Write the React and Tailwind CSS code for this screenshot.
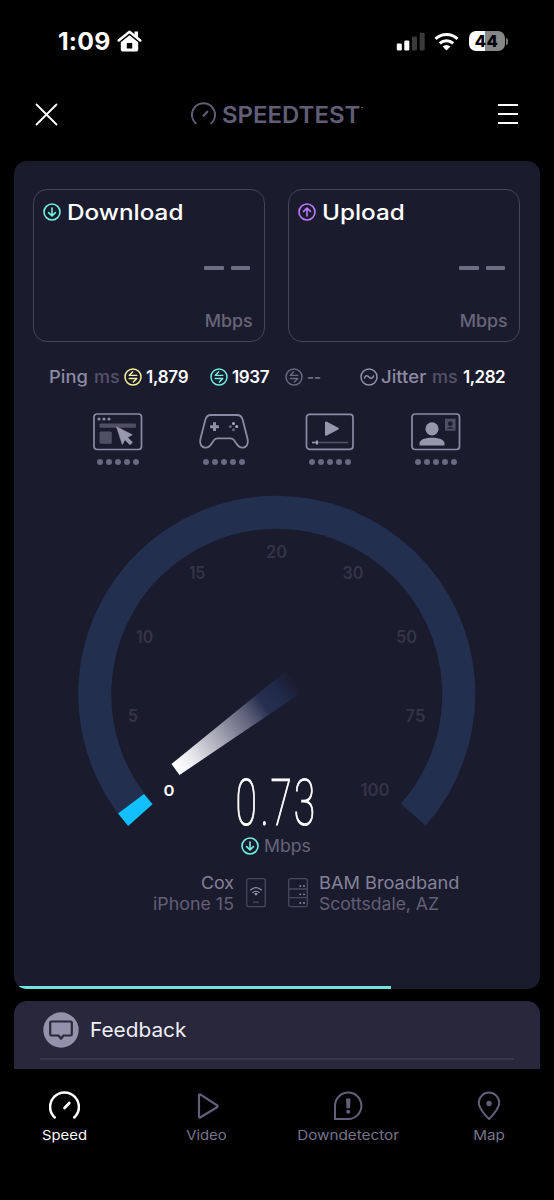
const DownArrow = ({ up = false, color, size = 18 }) => (
  <svg width={size} height={size} viewBox="0 0 18 18" fill="none" stroke={color} strokeWidth="1.6" strokeLinecap="round" strokeLinejoin="round" className="shrink-0">
    <circle cx="9" cy="9" r="8" />
    {up ? <path d="M9 12.900V5.400M5.600 8.400 9 5.200l3.400 3.200" /> : <path d="M9 5.100v7.500M5.600 9.600 9 12.800l3.400-3.200" />}
  </svg>
);

const PingIcon = ({ color }) => (
  <svg width="18" height="18" viewBox="0 0 18 18" fill="none" stroke={color} strokeWidth="1.5" strokeLinecap="round" strokeLinejoin="round" className="shrink-0">
    <circle cx="9" cy="9" r="8" />
    <path d="M8.700 3.800 5.200 7.400h7.600M5.200 10.500h7.600l-3.500 3.600" strokeWidth="1.4" />
  </svg>
);

const Speedo = ({ className, size, stroke = 2 }) => (
  <svg width={size} height={size} viewBox="0 0 28 28" fill="none" stroke="currentColor" strokeWidth={stroke} strokeLinecap="round" className={className}>
    <path d="M5.200 23.900a13 13 0 1 1 17.600 0" />
    <path d="m14 15.300 4.300-4.400" strokeWidth={stroke + 0.2} />
  </svg>
);

const ResultCard = ({ title, up, color }) => (
  <div className="flex h-[153px] w-[232px] flex-col rounded-[14px] border-[1.5px] border-[#464459] pl-[9px] pr-[11px]">
    <div className="mt-[9px] flex h-[26px] items-center gap-[6px]">
      <DownArrow up={up} color={color} />
      <span className="origin-left scale-x-[1.13] pt-px text-[21.5px] font-[550] leading-none text-white">{title}</span>
    </div>
    <div className="mr-[3px] mt-[41px] flex justify-end gap-[7px]">
      <span className="h-1 w-[19.5px] rounded-[1px] bg-[#6f6d83]" />
      <span className="h-1 w-[19.5px] rounded-[1px] bg-[#6f6d83]" />
    </div>
    <div className="mt-[39px] flex h-6 items-center justify-end text-[17px] font-medium leading-none text-[#686679]">
      <span className="origin-right scale-x-[1.05]">Mbps</span>
    </div>
  </div>
);

const Dots = () => (
  <div className="flex gap-[2.5px]">
    {[0, 1, 2, 3, 4].map((i) => (
      <span key={i} className="size-[6.5px] rounded-full bg-[#6b697f]" />
    ))}
  </div>
);

const WebIcon = () => (
  <svg width="50" height="38" viewBox="0 0 50 38" fill="none">
    <rect x="1" y="1" width="47.5" height="35.5" rx="3" stroke="#8d8ba3" strokeWidth="1.7" />
    <g fill="#8d8ba3"><circle cx="6" cy="6" r="1.6" /><circle cx="11" cy="6" r="1.6" /><circle cx="16" cy="6" r="1.6" /></g>
    <rect x="6.5" y="10.5" width="36.5" height="4.2" rx="1" fill="#514f64" />
    <rect x="6.5" y="18.5" width="12.3" height="12.3" rx="1.5" fill="#514f64" />
    <path d="m23.500 13.700 15.800 8.100-4.700 2.600 4.900 4.900-2.600 2.500-4.900-5-2.700 4.800Z" fill="#9997ae" stroke="#9997ae" strokeWidth=".6" strokeLinejoin="round" />
  </svg>
);

const GameIcon = () => (
  <svg width="52" height="38" viewBox="0 0 52 38" fill="none">
    <path d="M13 2h26c3.2 0 4.8 1.6 5.6 4.600l5 19.400c1.200 4.800-1 8.200-4.600 8.600-3.200.3-4.800-1.100-6.700-4.100l-1.700-2.600c-1.200-2-2-2.600-4-2.600H19.400c-2 0-2.800.6-4 2.600l-1.700 2.600c-1.900 3-3.500 4.400-6.700 4.100-3.600-.4-5.800-3.800-4.600-8.600l5-19.400C8.200 3.600 9.800 2 13 2Z" stroke="#8d8ba3" strokeWidth="1.8" />
    <path d="M16.500 9.300v8.800M12.100 13.700h8.800" stroke="#9290a7" strokeWidth="3" />
    <circle cx="35.500" cy="10.400" r="1.500" fill="#aaa8bd" /><circle cx="38.700" cy="13.600" r="1.500" fill="#aaa8bd" />
    <circle cx="32.300" cy="13.600" r="1.500" fill="#656379" /><circle cx="35.500" cy="16.800" r="1.500" fill="#656379" />
  </svg>
);

const PlayerIcon = () => (
  <svg width="50" height="38" viewBox="0 0 50 38" fill="none">
    <rect x="1.500" y="1.300" width="46.500" height="35" rx="3" stroke="#8d8ba3" strokeWidth="1.700" />
    <path d="M21 9.500v12.300l11.800-6.200Z" fill="#9896ad" stroke="#9896ad" strokeWidth="2" strokeLinejoin="round" />
    <path d="M7 29.500h36" stroke="#55536a" strokeWidth="1.600" /><path d="M7 29.500h5" stroke="#8d8ba3" strokeWidth="1.600" /><path d="M12 27.500v4" stroke="#a8a6ba" strokeWidth="1.800" />
  </svg>
);

const CallIcon = () => (
  <svg width="50" height="38" viewBox="0 0 50 38" fill="none">
    <rect x="1" y="1" width="47.500" height="35.500" rx="3" stroke="#8d8ba3" strokeWidth="1.700" />
    <circle cx="21" cy="15.800" r="6.600" fill="#9896ad" />
    <path d="M8.500 32.500v-2c0-3.500 4.300-5.800 12.500-5.800s12.500 2.300 12.500 5.800v2Z" fill="#9896ad" />
    <rect x="34" y="5.700" width="10.500" height="12" fill="#514f64" />
    <circle cx="39.300" cy="10.700" r="2.400" fill="#1e1d30" /><path d="M36 15.800c0-2 6.600-2 6.600 0Z" fill="#1e1d30" />
  </svg>
);

const labels = [
  ["0", 169, 796, 11], ["5", 133, 722, 10], ["10", 144.500, 643, 17], ["15", 197, 579, 16], ["20", 276.500, 557.500, 21],
  ["30", 353, 579, 21], ["50", 406.500, 643, 21], ["75", 415.500, 722, 20], ["100", 375, 796, 29],
];

const Gauge = () => (
  <svg width="526" height="345" viewBox="14 488 526 345" className="block overflow-visible">
    <defs>
      <linearGradient id="needle" gradientUnits="userSpaceOnUse" x1="176" y1="769" x2="295" y2="682">
        <stop offset="0" stopColor="#fff" />
        <stop offset=".12" stopColor="#ececf0" />
        <stop offset=".4" stopColor="#9b9bac" />
        <stop offset=".6" stopColor="#5e6079" />
        <stop offset=".74" stopColor="#252f50" />
        <stop offset=".86" stopColor="#202b4b" />
        <stop offset="1" stopColor="#1b1b2e" />
      </linearGradient>
    </defs>
    <path d="M140.200 814.600A182 182 0 1 1 413.300 814.600" fill="none" stroke="#222f4f" strokeWidth="33" />
    <path d="M118 813.500 144 794l8.500 10.200L128.200 826Z" fill="#12bfff" />
    <path d="M171.500 764 286 671l17 20.500L179.500 775Z" fill="url(#needle)" />
    <g fontFamily="Inter" fontSize="17" fontWeight="600" textAnchor="middle">
      {labels.map(([t, x, y, w], i) => (
        <text key={t} x={x} y={y} textLength={w} lengthAdjust="spacingAndGlyphs" fill={i ? "#353447" : "#fff"} fontSize={i ? 17 : 15}>{t}</text>
      ))}
    </g>
    <text transform="scale(.6 1)" x="392.500 434 451 489.500" y="825.500" fontFamily="Roboto" fontWeight="100" fontSize="65" fill="#fff" stroke="#fff" strokeWidth="1.1">0.73</text>
  </svg>
);

const Tab = ({ label, active, children, stretch }) => (
  <div className={active ? "flex flex-1 flex-col items-center text-white" : "flex flex-1 flex-col items-center text-[#625f7a]"}>
    <div className="mt-[21px] flex h-8 items-center justify-center">{children}</div>
    <span className={(active ? "text-white " : "text-[#777588] ") + "mt-[4px] text-[13.5px] leading-[18px] " + stretch}>{label}</span>
  </div>
);

export default function App() {
  return (
    <div className="flex h-[1200px] w-[554px] flex-col overflow-hidden bg-black font-['Inter',sans-serif] text-white">
      <div className="flex h-[82px] shrink-0 items-center justify-between pl-[58px] pr-[46px]">
        <div className="flex items-center gap-[6px]">
          <span className="w-[53px] origin-left scale-x-[1.03] pt-px text-[24px] font-bold leading-none tracking-[0.2px]">1:09</span>
          <svg width="25" height="22" viewBox="0 0 25 22" fill="none">
            <path d="M1.700 10.500 12.500 1.800l10.800 8.700" stroke="#fff" strokeWidth="2.500" strokeLinecap="round" strokeLinejoin="round" />
            <path d="M17.500 1.500h3.500V8l-3.500-2.500Z" fill="#fff" />
            <path fillRule="evenodd" d="m12.500 5.300 8.700 7v7c0 1.500-.8 2.300-2.200 2.300H6c-1.400 0-2.200-.8-2.200-2.300v-7ZM9.800 13v5.500h5.400V13Z" fill="#fff" />
          </svg>
        </div>
        <div className="flex items-center">
          <svg width="29" height="19" viewBox="0 0 29 19">
            <rect x=".8" y="11.500" width="5" height="7" rx="1.300" fill="#fff" /><rect x="8.300" y="8.500" width="5" height="10" rx="1.300" fill="#fff" />
            <rect x="16" y="4.500" width="5" height="14" rx="1.300" fill="#3a3a3a" /><rect x="23.700" y=".8" width="5" height="17.700" rx="1.300" fill="#3a3a3a" />
          </svg>
          <svg width="25" height="19" viewBox="0 0 25 19" fill="none" stroke="#fff" strokeWidth="3" className="ml-[9px]">
            <path d="M1.500 6.900a15.800 15.800 0 0 1 22 0" /><path d="M5.800 11.400a9.800 9.800 0 0 1 13.400 0" />
            <path d="m12.500 18.500-3.900-3.900a5.300 5.300 0 0 1 7.800 0Z" fill="#fff" stroke="none" />
          </svg>
          <div className="ml-[10px] flex h-5 w-9 items-center justify-center rounded-[7px] bg-[linear-gradient(90deg,#fff_44%,#878787_44%)] text-[16.500px] font-extrabold leading-none tracking-[0.3px] text-black">44</div>
          <span className="ml-[1.500px] h-[7px] w-[2px] rounded-r-full bg-[#777]" />
        </div>
      </div>

      <div className="flex h-16 shrink-0 items-center justify-between pl-[35px] pr-[36px]">
        <svg width="23" height="23" viewBox="0 0 23 23" stroke="#fff" strokeWidth="1.800" strokeLinecap="round"><path d="m1.500 1.500 20 20m0-20-20 20" /></svg>
        <div className="mr-[2px] flex items-center text-[#605e76]">
          <Speedo size={25} stroke={2.200} className="shrink-0" />
          <div className="ml-[6px] flex w-[138px] pt-[2px]">
            <span className="origin-left scale-x-[1.065] text-[22.500px] font-semibold leading-none">SPEEDTEST</span>
          </div>
          <span className="mb-[13px] ml-px h-[1.500px] w-[1.500px] bg-[#4b495d]" />
        </div>
        <div className="flex w-5 flex-col gap-[7px]">
          <span className="h-[2px] bg-white" /><span className="h-[2px] bg-white" /><span className="h-[2px] bg-white" />
        </div>
      </div>

      <main className="mx-[14px] mt-[15px] flex h-[828px] shrink-0 flex-col overflow-hidden rounded-[13px] bg-[#1b1b2e]">
        <div className="mt-7 flex gap-[23px] pl-[19px]">
          <ResultCard title="Download" color="#70f1df" />
          <ResultCard title="Upload" color="#bc79fa" up />
        </div>

        <div className="flex h-[70px] shrink-0 items-center whitespace-nowrap pl-[35px] text-[17px] font-semibold leading-none">
          <span className="w-[45px] origin-left scale-x-[1.08] font-medium text-[#8d8ba3]">Ping</span>
          <span className="w-[30px] origin-left scale-x-[1.06] font-medium text-[#55536a]">ms</span>
          <PingIcon color="#faf29a" />
          <span className="ml-1 w-[64px] tracking-[-0.250px]">1,879</span>
          <PingIcon color="#70f1df" />
          <span className="ml-1 w-[53px] tracking-[-0.400px]">1937</span>
          <PingIcon color="#6b697f" />
          <span className="ml-1 w-[53px] origin-left scale-x-[0.9] text-[#6b697f]">--</span>
          <svg width="18" height="18" viewBox="0 0 18 18" fill="none" stroke="#9290a7" strokeWidth="1.500" strokeLinecap="round" className="shrink-0">
            <circle cx="9" cy="9" r="8" /><path d="M4.500 10c1-3 3-2.700 4.500-1s3.500 2 4.500-1" />
          </svg>
          <span className="ml-[3px] w-[51px] origin-left scale-x-[1.09] font-medium text-[#8d8ba3]">Jitter</span>
          <span className="w-[31px] origin-left scale-x-[1.06] font-medium text-[#55536a]">ms</span>
          <span className="tracking-[-0.500px]">1,282</span>
        </div>

        <div className="ml-[51px] grid w-[424px] shrink-0 grid-cols-4">
          {[WebIcon, GameIcon, PlayerIcon, CallIcon].map((Icon, i) => (
            <div key={i} className="mt-px flex flex-col items-center gap-[7.5px]"><Icon /><Dots /></div>
          ))}
        </div>

        <div className="mt-[23px] shrink-0"><Gauge /></div>
        <div className="flex h-[26px] shrink-0 items-center justify-center gap-[5px] pr-[3px]">
          <DownArrow color="#70f1df" />
          <span className="w-[46px] origin-left scale-x-[1.04] text-[17px] leading-none text-[#686679]">Mbps</span>
        </div>

        <div className="mt-[13px] flex h-[42px] shrink-0 items-center text-[17px] leading-[21px]">
          <div className="w-[220px] origin-right scale-x-[1.05] pt-px text-right text-[#858399]"><div>Cox</div><div className="text-[#626075]">iPhone 15</div></div>
          <svg width="20" height="30" viewBox="0 0 20 30" fill="none" className="ml-[12px]">
            <rect x=".7" y=".7" width="18.600" height="28" rx="2" stroke="#4a485d" strokeWidth="1.300" />
            <path d="M4.300 12.200c3.500-3.200 7.900-3.200 11.400 0M6.500 14.700c2-1.900 5-1.900 7 0" stroke="#9290a7" strokeWidth="1.300" />
            <path d="m10 17.700-1.900-1.900a2.700 2.700 0 0 1 3.800 0Z" fill="#9290a7" /><path d="M7 24.200h6" stroke="#4a485d" strokeWidth="1.200" />
          </svg>
          <svg width="20" height="30" viewBox="0 0 20 30" fill="none" className="ml-[22px]">
            <rect x=".7" y=".7" width="18.600" height="28" rx="2" stroke="#4a485d" strokeWidth="1.300" /><path d="M1 11h18M1 19.700h18" stroke="#4a485d" strokeWidth="1.300" />
            {[8, 16.300, 25].map((y) => <g key={y} fill="#9290a7"><circle cx="12.300" cy={y} r=".9" /><circle cx="16" cy={y} r=".9" /></g>)}
          </svg>
          <div className="ml-[11px] flex flex-col items-start whitespace-nowrap pt-px text-[#858399]">
            <div className="origin-left scale-x-[1.07]">BAM Broadband</div>
            <div className="origin-left scale-x-[1.03] text-[#626075]">Scottsdale, AZ</div>
          </div>
        </div>
        <div className="mt-auto h-[3px] w-[377px] shrink-0 bg-[#70e5df]" />
      </main>

      <section className="mx-[14px] mt-3 h-[68px] shrink-0 rounded-t-[13px] bg-[#28273c] px-[26px]">
        <div className="flex h-[59px] items-center border-b-2 border-[#38374b] pl-[3px]">
          <svg width="36" height="36" viewBox="0 0 36 36" fill="none">
            <circle cx="18" cy="18" r="17.700" fill="#9492aa" />
            <path d="M8.500 9.500h19c.8 0 1.300.5 1.300 1.300v11.400c0 .8-.5 1.300-1.300 1.300h-7L18 26.700l-2.500-3.200h-7c-.8 0-1.300-.5-1.300-1.300V10.800c0-.8.5-1.300 1.300-1.300Z" stroke="#28273c" strokeWidth="2.200" strokeLinejoin="round" />
          </svg>
          <span className="ml-[11px] origin-left scale-x-[1.04] pt-px text-[20px] leading-none text-[#f1f0f6]">Feedback</span>
        </div>
      </section>

      <nav className="-mx-1.5 flex h-[131px] shrink-0">
        <Tab label="Speed" active stretch="scale-x-[1.1]"><Speedo size={31} stroke={2.300} /></Tab>
        <Tab label="Video" stretch="scale-x-[1.1]">
          <svg width="24" height="28" viewBox="0 0 24 28" fill="none" stroke="currentColor" strokeWidth="2.200" strokeLinejoin="round" className="ml-1"><path d="M3 3.500v21c0 1 .8 1.300 1.600.8L21 15.200c.8-.5.8-1.400 0-1.900L4.600 2.700C3.800 2.200 3 2.500 3 3.500Z" /></svg>
        </Tab>
        <Tab label="Downdetector" stretch="scale-x-[1.13]">
          <svg width="30" height="30" viewBox="0 0 30 30" fill="none"><path d="M2 28V14.800A13.200 13.200 0 1 1 15.200 28Z" stroke="currentColor" strokeWidth="2" /><path d="M13 7.500h4.500l-.4 9.700h-3.700Z" fill="currentColor" /><circle cx="15.200" cy="20.700" r="2" fill="currentColor" /></svg>
        </Tab>
        <Tab label="Map" stretch="scale-x-[1.13]">
          <svg width="24" height="30" viewBox="0 0 24 30" fill="none"><path d="M12 28S1.800 18.500 1.800 11.800a10.200 10.200 0 0 1 20.400 0C22.200 18.500 12 28 12 28Z" stroke="currentColor" strokeWidth="2" strokeLinejoin="round" /><circle cx="12" cy="12.500" r="2.700" fill="currentColor" /></svg>
        </Tab>
      </nav>
    </div>
  );
}
